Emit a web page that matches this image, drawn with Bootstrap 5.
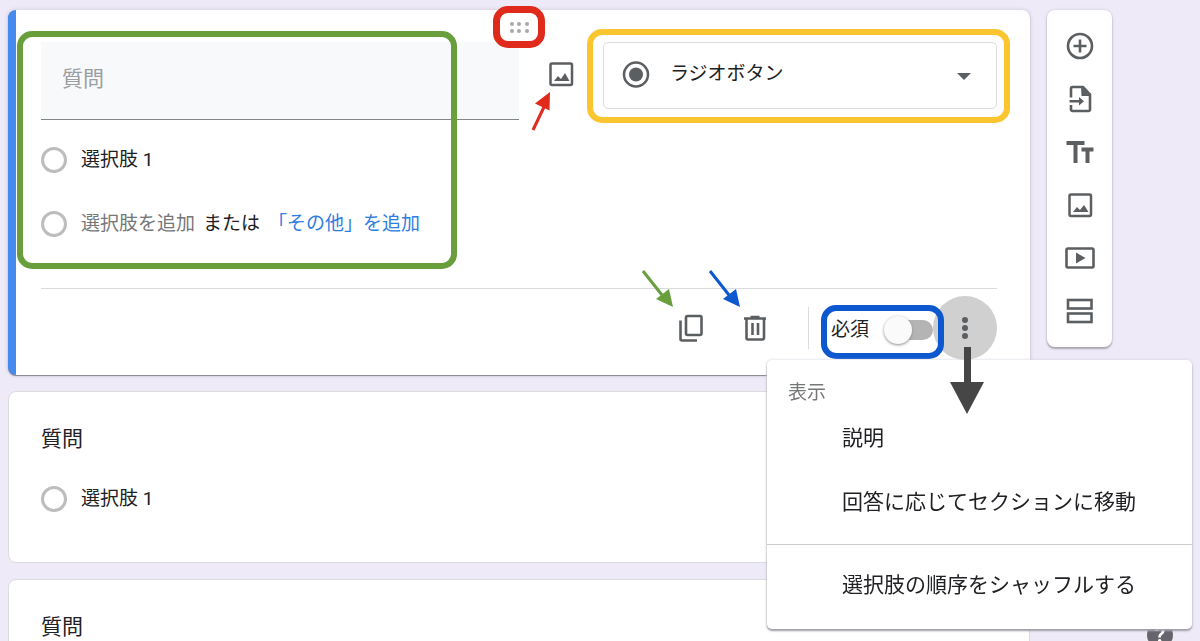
<!DOCTYPE html>
<html lang="ja">
<head>
<meta charset="utf-8">
<meta name="viewport" content="width=device-width, initial-scale=1">
<title>フォームの編集</title>
<link href="https://cdn.jsdelivr.net/npm/bootstrap@5.3.0/dist/css/bootstrap.min.css" rel="stylesheet">
<style>
  :root { --ink: #202124; --icon: #5c5f62; --muted: #757779; --line: #dadce0; --accent: #4689ef; }
  body { background: #eeeaf8; color: var(--ink); font: 19px/32px Roboto, "Noto Sans CJK JP", sans-serif; }
  button { color: inherit; }
  svg { display: block; }
  .editor { padding: 10px 88px 0 8px; gap: 17px; }
  .question { background: #fff; border: 1px solid var(--line); border-radius: 8px; padding: 31px 32px; }
  .question.active { border-width: 0 0 0 8px; border-color: var(--accent); padding: 32px 33px 8px 25px;
    box-shadow: 0 1px 1px #85838b, 0 0 4px #c9c5d3; z-index: 2; }
  .heading { font-size: 21px; line-height: 32px; margin: 0 0 12px; font-weight: 400; }
  .title-input { height: 78px; padding: 0 21px 4px; font-size: 21px; color: var(--ink); background: #f8f9fb;
    border: 0; border-bottom: 1px solid #808683; border-radius: 0; }
  .title-input::placeholder { color: #9a9ea1; }
  .tool { border: 0; background: none; padding: 0; color: var(--icon); display: grid; place-items: center; }
  .kind { flex: 0 0 394px; height: 67px; }
  .kind .form-select { height: 67px; padding: 0 60px 2px 66px; font-size: 19px; color: var(--ink); background: #fff;
    border: 1px solid var(--line); border-radius: 5px; }
  .kind svg { position: absolute; top: 16px; pointer-events: none; color: var(--icon); }
  .kind .dot { left: 17px; }
  .kind .caret { right: 17px; }
  .options { padding-top: 8px; }
  .choice { height: 64px; gap: 14px; }
  .choice .form-check-input { width: 26px; height: 26px; margin: 0; border: 3px solid #bdbdbd; background: #fff; opacity: 1; flex: none; }
  .link-text { border: 0; background: none; padding: 0; color: var(--muted); }
  .link-text.other { color: #2f7de1; }
  .footer-row { border-top: 1px solid var(--line); margin-top: 32px; height: 79px; }
  .footer-row .tool { width: 64px; height: 64px; }
  .rule { width: 1px; height: 42px; background: var(--line); margin: 0 22px 0 21px; }
  .required { padding-top: 4px; gap: 16px; }
  .switch { appearance: none; width: 48px; height: 20px; border-radius: 10px; margin: 0; position: relative;
    background: linear-gradient(#b4b4b4, #b4b4b4) 6px 0 no-repeat; }
  .switch::before { content: ""; position: absolute; left: -1px; top: -4px; width: 28px; height: 28px; border-radius: 50%;
    background: #fafafa; box-shadow: 0 1px 3px #8c8c8c; }
  .footer-row .more { background: #d0d0d0; border-radius: 50%; }
  .options-menu { position: absolute; top: 64px; right: -195px; width: 425px; background: #fff; border-radius: 5px;
    padding: 20px 0 12px; box-shadow: 0 2px 2px #a19fa8, 0 0 3px #cfccd7; z-index: 3; }
  .options-menu .caption { padding-left: 21px; line-height: 26px; color: var(--muted); }
  .options-menu button { display: block; width: 100%; height: 64px; border: 0; background: none; text-align: left;
    padding: 0 0 0 75px; font-size: 21px; }
  .options-menu hr { margin: 10px 0 8px; border-color: #c9cbcf; opacity: 1; }
  .side-tools { flex: 0 0 65px; background: #fff; border-radius: 8px; padding: 9px 0 10px; margin-left: 0;
    box-shadow: 0 2px 2px #aaa7b1, 0 0 3px #cbc7d5; }
  .side-tools .tool { width: 65px; height: 53px; }
  .drag { position: absolute; left: 50%; top: 0; width: 38px; height: 34px; margin-left: -23px; }
  .help { position: fixed; right: 27px; bottom: -7px; width: 26px; height: 26px; border-radius: 50%; background: #66656d;
    color: #fff; border: 0; padding: 0; font-size: 21px; font-weight: 700; line-height: 26px; }
  /* call-out frames and arrows drawn over the form */
  .frame { position: absolute; border: 6px solid; border-radius: 15px; pointer-events: none; z-index: 2; }
  .frame-green { left: 1px; top: 21px; width: 440px; height: 238px; border-color: #689e3c; }
  .frame-yellow { inset: -13px -13px -14px -16px; border-color: #fbc530; }
  .frame-blue { inset: -5px -11px -13px -10px; border-color: #0d57cf; }
  .frame-red { inset: -4px -7px; border-width: 7px; border-color: #e02a1b; }
  .arrow { position: absolute; pointer-events: none; z-index: 4; }
</style>
</head>
<body class="overflow-hidden vh-100">
<main class="editor d-flex align-items-start">
  <div class="flex-grow-1">
    <form class="question active position-relative mb-3">
      <span class="frame frame-green"></span>
      <button type="button" class="tool drag" aria-label="移動"><span class="frame frame-red"></span>
        <svg width="20" height="14" fill="#a8a8a8"><circle cx="3" cy="4" r="2"/><circle cx="10" cy="4" r="2"/><circle cx="18" cy="4" r="2"/><circle cx="3" cy="11" r="2"/><circle cx="10" cy="11" r="2"/><circle cx="18" cy="11" r="2"/></svg>
      </button>
      <div class="d-flex align-items-start">
        <div class="col-6"><input class="form-control title-input" type="text" placeholder="質問" aria-label="質問"></div>
        <div class="flex-grow-1 d-flex justify-content-center pt-3">
          <button type="button" class="tool position-relative" aria-label="画像を追加">
            <svg width="32" height="32" viewBox="0 0 32 32"><rect x="5.5" y="5.500" width="21.500" height="21.500" rx="1.500" fill="none" stroke="currentColor" stroke-width="2.500"/><path fill="currentColor" d="M9 23l4-5 3 3 4-6 4.500 8z"/></svg>
            <svg class="arrow" style="left:-16px;top:34px" width="24" height="40" fill="#e02a1b"><path d="M4 38L15 15" stroke="#e02a1b" stroke-width="3"/><path d="M21 0L6 11.500L20.500 18.500z"/></svg>
          </button>
        </div>
        <div class="kind position-relative">
          <span class="frame frame-yellow"></span>
          <select class="form-select" aria-label="質問の形式"><option>ラジオボタン</option></select>
          <svg class="dot" width="32" height="32" viewBox="0 0 32 32"><circle cx="16" cy="16.500" r="12" fill="none" stroke="currentColor" stroke-width="2.500"/><circle cx="16" cy="16.500" r="7" fill="currentColor"/></svg>
          <svg class="caret" width="32" height="32" viewBox="0 0 32 32"><path fill="currentColor" d="M9 15h14l-7 7z"/></svg>
        </div>
      </div>
      <div class="options">
        <div class="choice d-flex align-items-center"><input class="form-check-input" type="radio" name="q1" id="q1a"><label for="q1a">選択肢 1</label></div>
        <div class="choice d-flex align-items-center"><input class="form-check-input" type="radio" name="q1" id="q1b" aria-label="選択肢を追加">
          <div class="d-flex gap-2"><button type="button" class="link-text">選択肢を追加</button><span>または</span><button type="button" class="link-text other">「その他」を追加</button></div>
        </div>
      </div>
      <div class="footer-row d-flex align-items-center justify-content-end">
        <button type="button" class="tool position-relative" aria-label="コピーを作成">
          <svg width="32" height="32" viewBox="0 0 32 32" fill="none" stroke="currentColor" stroke-width="2.600"><rect x="11" y="4" width="15.500" height="19" rx="1.500"/><path d="M5.500 8.500V27a1.500 1.500 0 0 0 1.500 1.500H22"/></svg>
          <svg class="arrow" style="left:-18px;top:-27px" width="34" height="40" fill="#689e3c"><path d="M2 2L21 26" stroke="#689e3c" stroke-width="3"/><path d="M32 38L15 30L28 20z"/></svg>
        </button>
        <button type="button" class="tool position-relative" aria-label="削除">
          <svg width="32" height="32" viewBox="0 0 32 32" fill="none" stroke="currentColor" stroke-width="2.600"><path d="M7.500 7v19a1.500 1.500 0 0 0 1.500 1.500h14.500a1.500 1.500 0 0 0 1.500-1.500V7M5 6.500h22M11.500 5h9M13.500 11v12M19 11v12"/></svg>
          <svg class="arrow" style="left:-15px;top:-27px" width="34" height="40" fill="#0d57cf"><path d="M2 2L21 26" stroke="#0d57cf" stroke-width="3"/><path d="M32 38L15 30L28 20z"/></svg>
        </button>
        <span class="rule"></span>
        <div class="required d-flex align-items-center position-relative">
          <label for="req">必須</label><input class="switch" type="checkbox" role="switch" id="req">
          <span class="frame frame-blue"></span>
        </div>
        <div class="position-relative">
          <button type="button" class="tool more" aria-label="その他のオプション" aria-expanded="true">
            <svg width="32" height="32" fill="currentColor"><circle cx="16" cy="8" r="3"/><circle cx="16" cy="16" r="3"/><circle cx="16" cy="24" r="3"/></svg>
          </button>
          <div class="options-menu">
            <div class="caption">表示</div>
            <button type="button">説明</button>
            <button type="button">回答に応じてセクションに移動</button>
            <hr>
            <button type="button">選択肢の順序をシャッフルする</button>
          </div>
          <svg class="arrow" style="left:17px;top:51px" width="34" height="68" fill="#464646"><path d="M14 0h7v35h13L17 67L0 35h14z"/></svg>
        </div>
      </div>
    </form>
    <section class="question mb-3">
      <h2 class="heading">質問</h2>
      <div class="choice d-flex align-items-center"><input class="form-check-input" type="radio" name="q2" id="q2a"><label for="q2a">選択肢 1</label></div>
    </section>
    <section class="question">
      <h2 class="heading">質問</h2>
      <div class="choice d-flex align-items-center"><input class="form-check-input" type="radio" name="q3" id="q3a"><label for="q3a">選択肢 1</label></div>
    </section>
  </div>
  <nav class="side-tools" aria-label="追加">
    <button type="button" class="tool" aria-label="質問を追加"><svg width="32" height="32" viewBox="0 0 32 32" fill="none" stroke="currentColor" stroke-width="2.600"><circle cx="16" cy="16" r="12"/><path d="M16 9.500v13M9.500 16h13"/></svg></button>
    <button type="button" class="tool" aria-label="質問をインポート"><svg width="32" height="32" viewBox="0 0 32 32" fill="none" stroke="currentColor" stroke-width="2.600"><path d="M7 14.500V5.500A1.500 1.500 0 0 1 8.500 4H19l7 7.500V26.500a1.500 1.500 0 0 1-1.500 1.500H8.500A1.500 1.500 0 0 1 7 26.500V22M5.500 18.300H16"/><path d="M17 3.500l9.500 9.500H17.500zM15 14l5 4.300-5 4.300z" fill="currentColor" stroke="none"/></svg></button>
    <button type="button" class="tool" aria-label="タイトルと説明を追加"><svg width="32" height="32" viewBox="0 0 32 32" fill="none" stroke="currentColor" stroke-width="4"><path d="M2.500 7h18M11.500 7v20M17.500 13.500h12M23.500 13.500V27"/></svg></button>
    <button type="button" class="tool" aria-label="画像を追加"><svg width="32" height="32" viewBox="0 0 32 32"><rect x="5.500" y="5.500" width="21.500" height="21.500" rx="1.500" fill="none" stroke="currentColor" stroke-width="2.500"/><path fill="currentColor" d="M9 23l4-5 3 3 4-5 4.500 7z"/></svg></button>
    <button type="button" class="tool" aria-label="動画を追加"><svg width="32" height="32" viewBox="0 0 32 32"><rect x="2.500" y="6.500" width="27" height="19" rx="1.500" fill="none" stroke="currentColor" stroke-width="2.600"/><path fill="currentColor" d="M12 10.500v11l9.500-5.500z"/></svg></button>
    <button type="button" class="tool" aria-label="セクションを追加"><svg width="32" height="32" viewBox="0 0 32 32" fill="none" stroke="currentColor" stroke-width="2.600"><rect x="4" y="5" width="23.500" height="8.500"/><rect x="4" y="18.500" width="23.500" height="8.500"/></svg></button>
  </nav>
</main>
<button type="button" class="help" aria-label="ヘルプ">?</button>
<script src="https://cdn.jsdelivr.net/npm/bootstrap@5.3.0/dist/js/bootstrap.bundle.min.js"></script>
</body>
</html>
